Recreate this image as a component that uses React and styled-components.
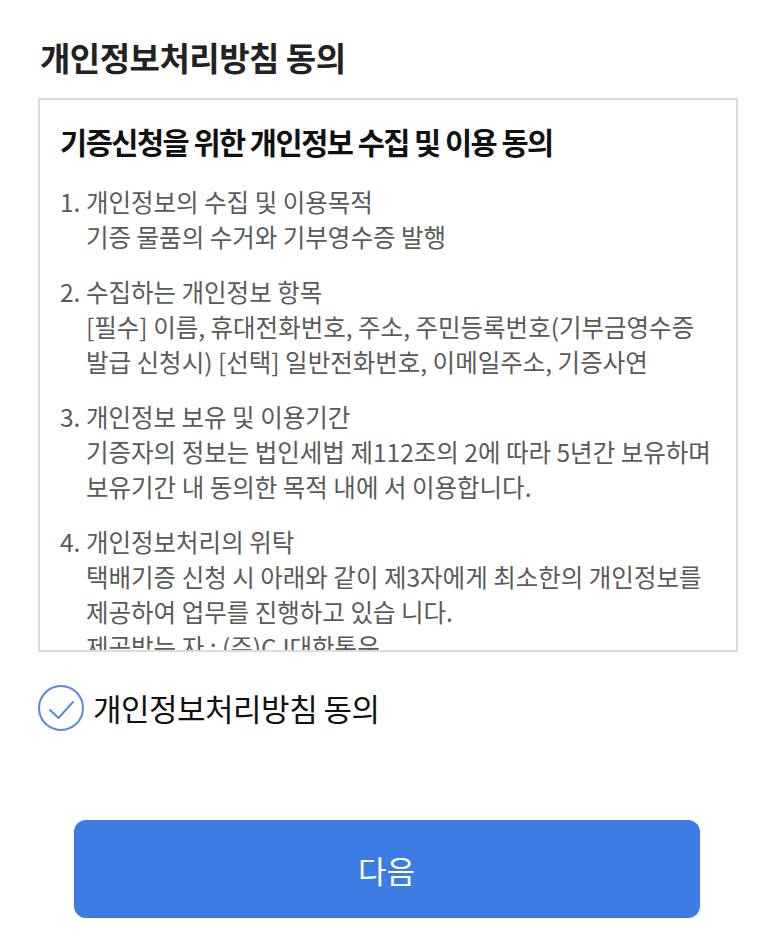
import React, { useState } from 'react';
import styled, { createGlobalStyle } from 'styled-components';

const GlobalStyle = createGlobalStyle`
  body {
    margin: 0;
    background: #fff;
    font-family: "Noto Sans CJK KR", "Noto Sans", sans-serif;
  }
`;

const Page = styled.div`
  width: 773px;
  height: 946px;
  padding: 36px 35px 0 38px;
  box-sizing: border-box;
`;

const Heading = styled.h1`
  margin: 0 0 20px 2px;
  font-size: 33px;
  line-height: 42px;
  font-weight: 700;
  letter-spacing: -0.5px;
  color: #222;
`;

const TermsBox = styled.div`
  height: 554px;
  box-sizing: border-box;
  border: 2px solid #dcdcdc;
  padding: 22px 20px 0;
  overflow: hidden;
`;

const TermsTitle = styled.h2`
  margin: 0 0 24px;
  font-size: 29.5px;
  line-height: 38px;
  font-weight: 700;
  letter-spacing: -1.5px;
  color: #111;
`;

const Section = styled.div`
  margin-bottom: 20px;
  color: #5a5a5a;
  font-size: 24.5px;
  line-height: 35px;
`;

const Line = styled.div`
  white-space: nowrap;
  padding-left: ${(p) => (p.$indent ? '26px' : '0')};
`;

const CheckRow = styled.label`
  display: flex;
  align-items: center;
  gap: 9px;
  margin-top: 33px;
  cursor: pointer;
  font-size: 31px;
  line-height: 40px;
  color: #111;
  letter-spacing: -0.5px;
`;

const CheckCircle = styled.span`
  width: 46px;
  height: 46px;
  flex-shrink: 0;
  display: flex;
  align-items: center;
  justify-content: center;
`;

const ButtonWrap = styled.div`
  display: flex;
  justify-content: center;
  margin-top: 89px;
  margin-right: -35px;
  margin-left: -38px;
`;

const NextButton = styled.button`
  width: 626px;
  height: 98px;
  border: none;
  border-radius: 12px;
  background: #3b7de3;
  color: #fff;
  font-family: inherit;
  font-size: 31px;
  font-weight: 400;
  cursor: pointer;
`;

const sections = [
  {
    title: '1. 개인정보의 수집 및 이용목적',
    lines: ['기증 물품의 수거와 기부영수증 발행'],
  },
  {
    title: '2. 수집하는 개인정보 항목',
    lines: [
      '[필수] 이름, 휴대전화번호, 주소, 주민등록번호(기부금영수증',
      '발급 신청시) [선택] 일반전화번호, 이메일주소, 기증사연',
    ],
  },
  {
    title: '3. 개인정보 보유 및 이용기간',
    lines: [
      '기증자의 정보는 법인세법 제112조의 2에 따라 5년간 보유하며',
      '보유기간 내 동의한 목적 내에 서 이용합니다.',
    ],
  },
  {
    title: '4. 개인정보처리의 위탁',
    lines: [
      '택배기증 신청 시 아래와 같이 제3자에게 최소한의 개인정보를',
      '제공하여 업무를 진행하고 있습 니다.',
      '제공받는 자 : (주)CJ대한통운',
    ],
  },
];

const App = () => {
  const [agreed, setAgreed] = useState(true);
  const tone = agreed ? '#5b8ad6' : '#bbb';

  return (
    <Page>
      <GlobalStyle />
      <Heading>개인정보처리방침 동의</Heading>
      <TermsBox>
        <TermsTitle>기증신청을 위한 개인정보 수집 및 이용 동의</TermsTitle>
        {sections.map((s) => (
          <Section key={s.title}>
            <Line>{s.title}</Line>
            {s.lines.map((l) => (
              <Line $indent key={l}>{l}</Line>
            ))}
          </Section>
        ))}
      </TermsBox>
      <CheckRow onClick={() => setAgreed(!agreed)}>
        <CheckCircle>
          <svg width="46" height="46" viewBox="0 0 46 46" fill="none">
            <circle cx="23" cy="23" r="22" stroke={tone} strokeWidth="2" />
            <path d="M12 25 L20.5 33 L35 17" stroke={tone} strokeWidth="2" strokeLinecap="round" strokeLinejoin="round" />
          </svg>
        </CheckCircle>
        개인정보처리방침 동의
      </CheckRow>
      <ButtonWrap>
        <NextButton>다음</NextButton>
      </ButtonWrap>
    </Page>
  );
};

export default App;
